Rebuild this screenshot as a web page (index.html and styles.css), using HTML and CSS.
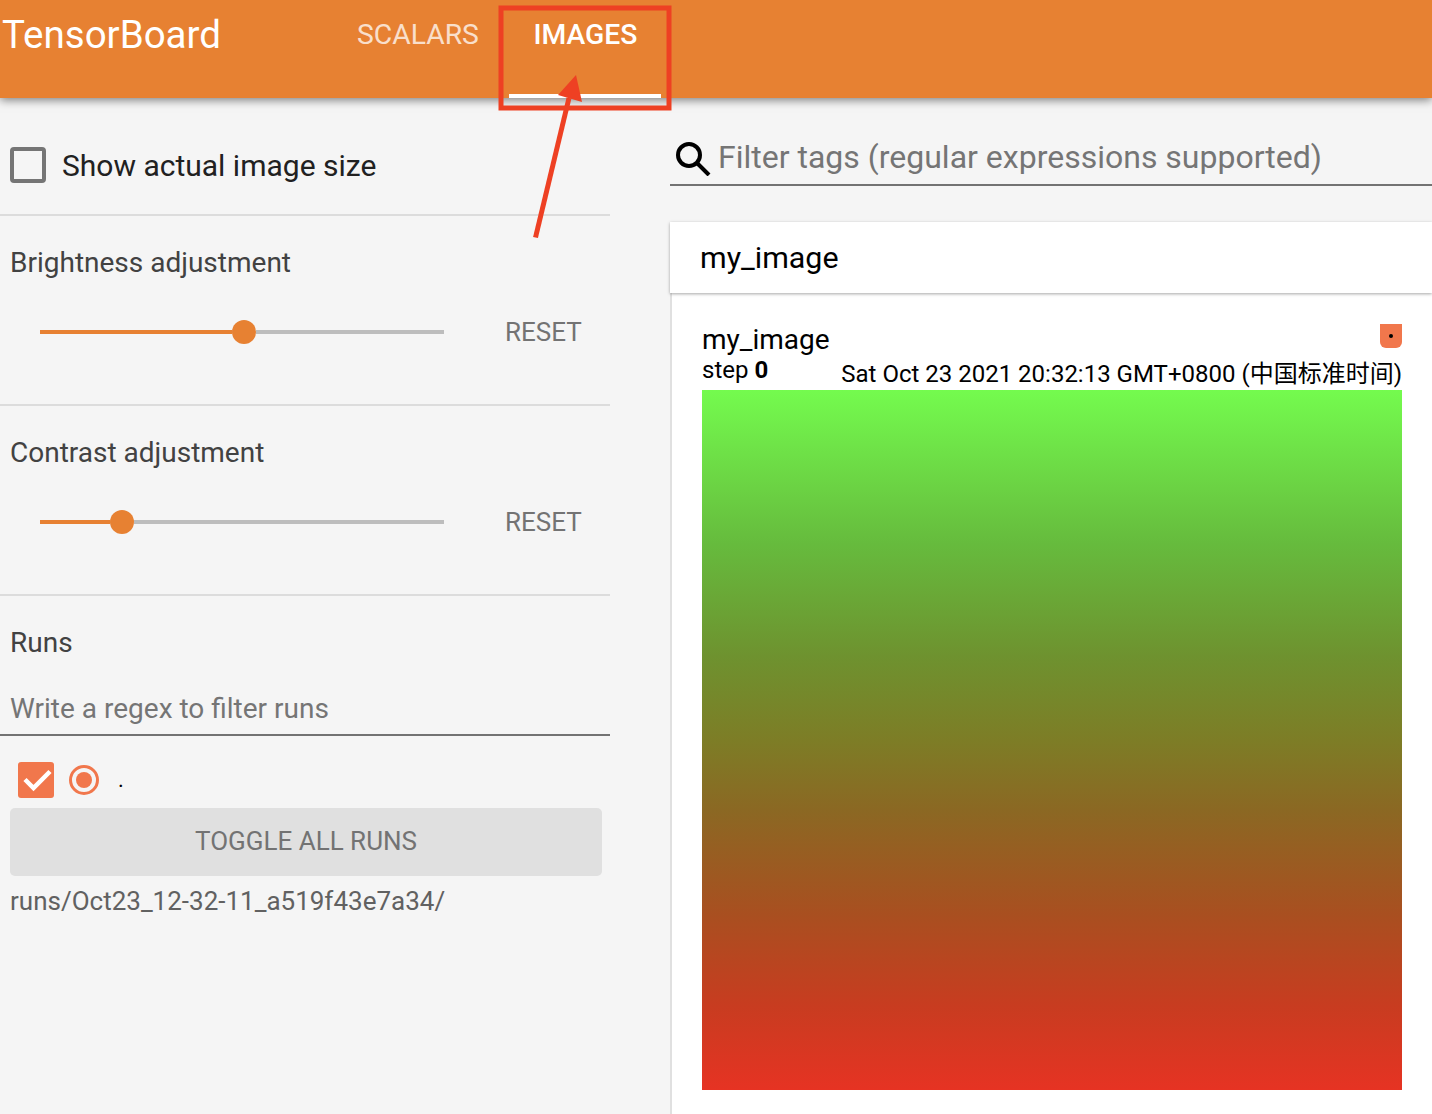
FILE: index.html
```html
<!DOCTYPE html>
<html lang="en">
<head>
<meta charset="utf-8">
<title>TensorBoard</title>
<link rel="stylesheet" href="styles.css">
</head>
<body>
<header class="topbar">
  <div class="brand">TensorBoard</div>
  <nav class="tabs">
    <div class="tab">SCALARS</div>
    <div class="tab tab-active">IMAGES</div>
  </nav>
</header>
<div class="layout">
  <aside class="sidebar">
    <section class="sec sec-check">
      <span class="checkbox"></span>
      <span class="check-label">Show actual image size</span>
    </section>
    <section class="sec sec-slider">
      <div class="sec-title">Brightness adjustment</div>
      <div class="slider-row">
        <div class="slider"><div class="fill fill-b"></div><div class="knob"></div><div class="rest"></div></div>
        <div class="reset">RESET</div>
      </div>
    </section>
    <section class="sec sec-slider">
      <div class="sec-title">Contrast adjustment</div>
      <div class="slider-row">
        <div class="slider"><div class="fill fill-c"></div><div class="knob"></div><div class="rest"></div></div>
        <div class="reset">RESET</div>
      </div>
    </section>
    <section class="runs">
      <div class="sec-title">Runs</div>
      <div class="regex">Write a regex to filter runs</div>
      <div class="run-row">
        <span class="run-check">
          <svg width="36" height="36" viewBox="0 0 36 36"><path d="M7 17.500 L15.500 26 L32 9.500" fill="none" stroke="#fff" stroke-width="4.500"/></svg>
        </span>
        <span class="run-radio"><span class="run-dot"></span></span>
        <span class="run-name">.</span>
      </div>
      <div class="toggle">TOGGLE ALL RUNS</div>
      <div class="run-path">runs/Oct23_12-32-11_a519f43e7a34/</div>
    </section>
  </aside>
  <main class="main">
    <div class="filter">
      <svg class="search" width="38" height="38" viewBox="0 0 38 38"><circle cx="14" cy="17" r="11" fill="none" stroke="#000" stroke-width="4"/><path d="M22.500 25.500 L34 37" stroke="#000" stroke-width="4"/></svg>
      <span class="filter-text">Filter tags (regular expressions supported)</span>
    </div>
    <div class="pane-wrap">
      <div class="pane-head">my_image</div>
      <div class="pane-body">
        <div class="card">
          <div class="card-head">
            <div class="card-left">
              <div class="card-title">my_image</div>
              <div class="card-step">step <b>0</b></div>
            </div>
            <div class="card-right">
              <span class="run-tag"><span class="tag-dot"></span></span>
              <div class="card-time">Sat Oct 23 2021 20:32:13 GMT+0800 (中国标准时间)</div>
            </div>
          </div>
          <div class="picture"></div>
        </div>
      </div>
    </div>
  </main>
</div>
<svg class="annotation" width="1432" height="260" viewBox="0 0 1432 260">
  <rect x="501" y="8" width="168" height="100" fill="none" stroke="#ee4023" stroke-width="5"/>
  <path d="M535.500 237.500 L569 98" fill="none" stroke="#ee4023" stroke-width="5"/>
  <path d="M576 75 L558 95 L582 102 Z" fill="#ee4023"/>
</svg>
</body>
</html>
```
FILE: styles.css
```css
* { box-sizing: border-box; }
html, body { margin: 0; padding: 0; }
body {
  width: 1432px;
  height: 1114px;
  overflow: hidden;
  background: #f5f5f5;
  font-family: Roboto, "Noto Sans CJK SC", sans-serif;
  position: relative;
}
.topbar {
  height: 98px;
  background: #e78132;
  box-shadow: 0 2px 9px rgba(0,0,0,.5);
  display: flex;
  position: relative;
  color: #fff;
}
.brand { font-size: 38.500px; line-height: 69px; padding-left: 2px; width: 333px; }
.tabs { display: flex; }
.tab {
  font-size: 28.300px;
  line-height: 69px;
  padding: 0 24px;
  opacity: .75;
  height: 98px;
  width: 170px;
  text-align: center;
}
.tab-active { opacity: 1; font-weight: 500; width: 152px; margin-left: 6px; padding: 0 0 0 1px; border-bottom: 4px solid #fff; }
.layout { display: flex; height: 1016px; }
.sidebar { width: 670px; flex: none; }
.sec { width: 610px; border-bottom: 2px solid #dcdcdc; }
.sec-check { height: 118px; display: flex; align-items: center; padding: 18px 0 0 10px; }
.checkbox { width: 36px; height: 36px; border: 4px solid #757575; border-radius: 4px; }
.check-label { font-size: 30px; color: #212121; margin-left: 16px; }
.sec-slider { height: 190px; padding: 28px 0 0 10px; }
.sec-title { font-size: 28px; line-height: 38px; color: #424242; }
.slider-row { display: flex; align-items: center; margin-top: 30px; height: 40px; padding-left: 30px; }
.slider { width: 404px; display: flex; align-items: center; height: 24px; }
.fill { height: 4px; background: #e78132; }
.fill-b { width: 192px; }
.fill-c { width: 70px; }
.knob { width: 24px; height: 24px; border-radius: 50%; background: #e78132; flex: none; }
.rest { flex: 1; height: 4px; background: #bdbdbd; }
.reset { font-size: 26px; line-height: 38px; color: #737373; margin-left: 61px; }
.runs { padding: 28px 0 0 10px; width: 610px; }
.regex {
  font-size: 28px;
  color: #757575;
  height: 54px;
  line-height: 54px;
  margin-top: 20px;
  border-bottom: 2px solid #737373;
  margin-left: -10px;
  padding-left: 10px;
}
.run-row { display: flex; align-items: center; height: 36px; margin-top: 26px; padding-left: 8px; }
.run-check { width: 36px; height: 36px; background: #f1774c; border-radius: 3px; display: flex; }
.run-radio { width: 30px; height: 30px; margin-left: 15px; border: 3px solid #f1774c; border-radius: 50%; display: flex; align-items: center; justify-content: center; }
.run-dot { width: 16px; height: 16px; border-radius: 50%; background: #f1774c; }
.run-name { font-size: 22px; line-height: 32px; margin-left: 19px; color: #000; }
.toggle {
  width: 592px;
  height: 68px;
  margin-top: 10px;
  background: #e0e0e0;
  border-radius: 5px;
  color: #737373;
  font-size: 26px;
  line-height: 66px;
  text-align: center;
}
.run-path { font-size: 26px; color: #616161; margin-top: 8px; line-height: 34px; }
.main { flex: 1; min-width: 0; }
.filter { height: 88px; border-bottom: 2px solid #737373; display: flex; align-items: center; padding: 32px 0 0 5px; margin-bottom: 36px; width: 762px; }
.search { flex: none; }
.filter-text { font-size: 32px; color: #757575; margin-left: 5px; }
.pane-wrap { width: 762px; }
.pane-head {
  height: 71px;
  background: #fff;
  font-size: 30.400px;
  line-height: 72px;
  padding-left: 30px;
  color: #000;
  box-shadow: 0 1px 3px rgba(0,0,0,.35);
  position: relative;
}
.pane-body { background: #fff; border-left: 2px solid #e0e0e0; height: 830px; padding: 30px 30px 0 30px; }
.card-head { height: 67px; display: flex; justify-content: space-between; }
.card-title { font-size: 28px; line-height: 34px; color: #000; }
.card-step { font-size: 24px; line-height: 26px; color: #000; }
.card-right { display: flex; flex-direction: column; align-items: flex-end; }
.run-tag { flex: none; width: 22px; height: 24px; margin-top: 1px; background: #f1774c; border-radius: 0 0 6px 6px; display: flex; align-items: center; justify-content: center; }
.tag-dot { width: 4px; height: 4px; background: #000; border-radius: 50%; }
.card-time { font-size: 24px; line-height: 30px; margin-top: 11px; color: #000; white-space: nowrap; }
.picture { height: 700px; background: linear-gradient(#74fb4e 0%, #66bb3d 22%, #6e922f 38%, #7d7d26 50%, #8b6823 60%, #a94f20 75%, #c83c20 88%, #e63323 100%); }
.annotation { position: absolute; left: 0; top: 0; pointer-events: none; }
```
